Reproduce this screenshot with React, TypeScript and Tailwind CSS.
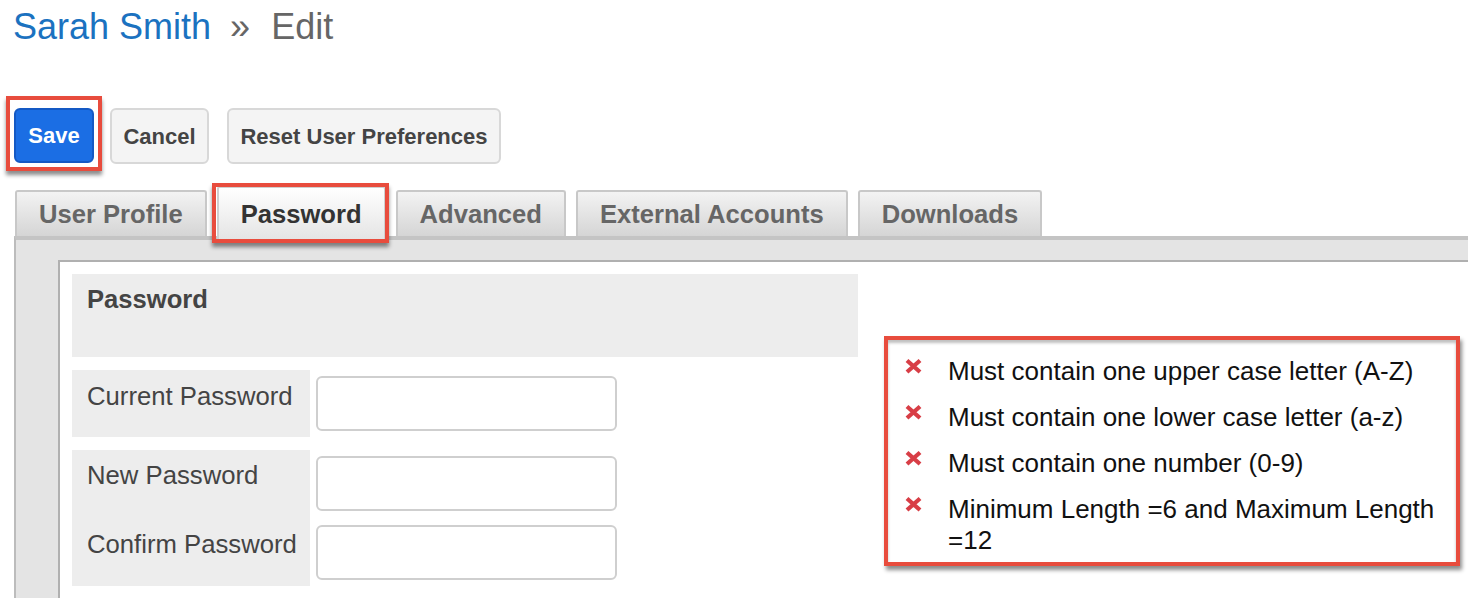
import React from 'react';

const tabs = ['User Profile', 'Password', 'Advanced', 'External Accounts', 'Downloads'];

const rules = [
  'Must contain one upper case letter (A-Z)',
  'Must contain one lower case letter (a-z)',
  'Must contain one number (0-9)',
  'Minimum Length =6 and Maximum Length =12',
];

function RedX() {
  return (
    <svg width="19" height="17" viewBox="0 0 19 17" className="mt-[2px] ml-[-1px]">
      <path
        d="M3 2.5 L16 14 M16 2.5 L3 14"
        stroke="#d3242d"
        strokeWidth="4.2"
        strokeLinecap="butt"
        opacity="0.88"
      />
    </svg>
  );
}

function TextInput() {
  return (
    <div className="w-[301px] h-[55px] bg-white border-2 border-[#cfcfcf] rounded-[6px]" />
  );
}

export default function App() {
  return (
    <div className="h-[598px] overflow-hidden bg-white font-['Liberation_Sans',Arial,sans-serif]">
      {/* title */}
      <div className="pt-[6px] pl-[13px] text-[36px] leading-[41px] whitespace-nowrap">
        <span className="text-[#1b72c0]">Sarah Smith</span>
        <span className="ml-[19px] text-[#666666]">»</span>
        <span className="ml-[21px] text-[#666666]">Edit</span>
      </div>

      {/* action buttons */}
      <div className="flex items-start mt-[49px] ml-[6px]">
        <div className="border-4 border-[#e84c3d] px-[4px] pt-[8px] pb-[4px] shadow-[0_4px_4px_rgba(0,0,0,0.45)]">
          <button className="w-[80px] h-[55px] rounded-[6px] bg-[#1b6ee4] border-2 border-[#1459c4] text-white font-bold text-[22px]">
            Save
          </button>
        </div>
        <button className="ml-[8px] mt-[12px] w-[99px] h-[56px] rounded-[6px] bg-[#f4f4f4] border-2 border-[#d8d8d8] text-[#444] font-bold text-[22px]">
          Cancel
        </button>
        <button className="ml-[18px] mt-[12px] w-[274px] h-[56px] rounded-[6px] bg-[#f4f4f4] border-2 border-[#d8d8d8] text-[#444] font-bold text-[22px]">
          Reset User Preferences
        </button>
      </div>

      {/* tabs */}
      <div className="relative z-10 flex items-end gap-[10px] mt-[15px] ml-[15px] h-[50px]">
        {tabs.map(tab =>
          tab === 'Password' ? (
            <div
              key={tab}
              className="relative h-[54px] -mb-[4px] px-[22px] flex items-center border-2 border-b-0 border-[#cfcfcf] rounded-t-[3px] bg-gradient-to-b from-white to-[#e4e4e4] text-[#333] font-bold text-[25.6px] whitespace-nowrap"
            >
              {tab}
              <div className="absolute -top-[5px] -bottom-[3px] -left-[7px] -right-[5px] border-4 border-[#e84c3d] shadow-[0_4px_4px_rgba(0,0,0,0.45)]" />
            </div>
          ) : (
            <div
              key={tab}
              className="h-[46px] px-[22px] flex items-center border-2 border-b-0 border-[#c8c8c8] rounded-t-[3px] bg-gradient-to-b from-[#f3f3f3] to-[#d5d5d5] text-[#666] font-bold text-[25.6px] whitespace-nowrap"
            >
              {tab}
            </div>
          ),
        )}
      </div>

      {/* tab panel */}
      <div className="ml-[14px] border-t-4 border-l-2 border-t-[#c4c4c4] border-l-[#bcbcbc] bg-[#e4e4e4] pt-[20px] pl-[42px]">
        <div className="border-t-2 border-l-2 border-[#b0b0b0] bg-white p-[12px] pb-[60px] flex items-start">
          {/* form */}
          <div className="w-[786px] shrink-0">
            <div className="h-[83px] bg-[#ededed] pl-[15px] pt-[10px] text-[25.6px] leading-[30px] font-bold text-[#444]">
              Password
            </div>

            <div className="flex mt-[13px] gap-[6px]">
              <div className="w-[238px] h-[67px] bg-[#ededed] pl-[15px] pt-[11px] text-[25.7px] leading-[30px] text-[#444] whitespace-nowrap">
                Current Password
              </div>
              <div className="py-[6px]">
                <TextInput />
              </div>
            </div>

            <div className="flex mt-[13px] gap-[6px]">
              <div className="w-[238px] bg-[#ededed] pl-[15px] py-[6px] flex flex-col gap-[14px] text-[25.7px] leading-[30px] text-[#444] whitespace-nowrap">
                <div className="h-[55px] pt-[4px]">New Password</div>
                <div className="h-[55px] pt-[4px]">Confirm Password</div>
              </div>
              <div className="py-[6px] flex flex-col gap-[14px]">
                <TextInput />
                <TextInput />
              </div>
            </div>
          </div>

          {/* password rules */}
          <div className="ml-[26px] mt-[62px] w-[576px] shrink-0 border-4 border-[#e84c3d] bg-white pl-[17px] pr-[10px] pt-[16px] pb-[6px] shadow-[inset_0_3px_3px_rgba(0,0,0,0.25),2px_4px_4px_rgba(0,0,0,0.45)]">
            <ul className="flex flex-col gap-[15px]">
              {rules.map(rule => (
                <li key={rule} className="flex items-start">
                  <div className="w-[43px] shrink-0">
                    <RedX />
                  </div>
                  <span className="text-[26px] leading-[31px] text-[#111]">{rule}</span>
                </li>
              ))}
            </ul>
          </div>
        </div>
      </div>
    </div>
  );
}
